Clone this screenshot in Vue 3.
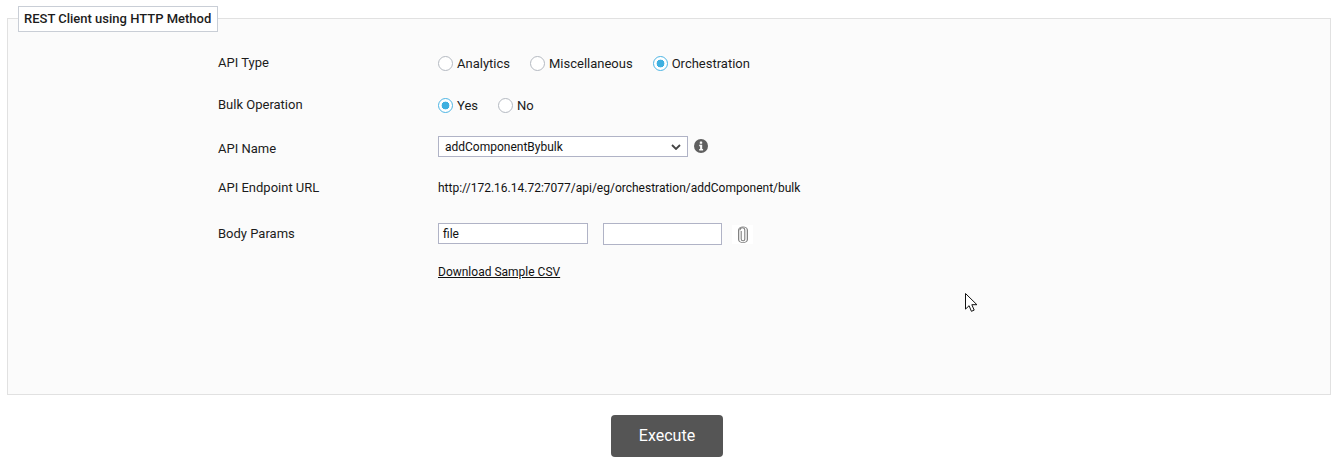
<script setup>
const apiTypes = [
  { label: 'Analytics', on: false },
  { label: 'Miscellaneous', on: false },
  { label: 'Orchestration', on: true }
]
const bulk = [
  { label: 'Yes', on: true },
  { label: 'No', on: false }
]
</script>

<template>
  <div class="page">
    <section class="panel">
      <h2 class="legend">REST Client using HTTP Method</h2>
      <div class="form">
        <div class="row row-type">
          <span class="label">API Type</span>
          <div class="radios">
            <span v-for="r in apiTypes" :key="r.label" class="radio">
              <i class="dot" :class="{ on: r.on }"></i>{{ r.label }}
            </span>
          </div>
        </div>
        <div class="row row-bulk">
          <span class="label">Bulk Operation</span>
          <div class="radios">
            <span v-for="r in bulk" :key="r.label" class="radio">
              <i class="dot" :class="{ on: r.on }"></i>{{ r.label }}
            </span>
          </div>
        </div>
        <div class="row row-name">
          <span class="label name-label">API Name</span>
          <div class="inline shift">
            <div class="select">
              <span>addComponentBybulk</span>
              <svg width="10" height="6" viewBox="0 0 10 6"><path d="M1 1l4 4 4-4" fill="none" stroke="#444" stroke-width="1.8"/></svg>
            </div>
            <svg class="info" width="14" height="14" viewBox="0 0 14 14">
              <circle cx="7" cy="7" r="7" fill="#5f5f5f"/>
              <rect x="5.8" y="2.4" width="2.4" height="2.3" rx=".5" fill="#fafafa"/>
              <path d="M5.2 5.8h3v4.2h.9v1.4H5.2V10h.9V7.2h-.9z" fill="#fafafa"/>
            </svg>
          </div>
        </div>
        <div class="row row-url">
          <span class="label">API Endpoint URL</span>
          <span class="url">http://172.16.14.72:7077/api/eg/orchestration/addComponent/bulk</span>
        </div>
        <div class="row row-body">
          <span class="label">Body Params</span>
          <div class="inline top">
            <div class="input first">file</div>
            <div class="input second"></div>
            <span class="clip">
              <svg width="12" height="18" viewBox="0 0 12 18">
                <path d="M4.2 5v8a1.8 1.8 0 0 0 3.6 0V4.2a2.4 2.4 0 0 0-4.8 0" fill="none" stroke="#808080" stroke-width="1.1"/>
                <path d="M3 4.2a3 3 0 0 1 6 0v9a3 3 0 0 1-6 0V4.2" transform="translate(6 8.5) scale(1.45 1.05) translate(-6 -8.5)" fill="none" stroke="#808080" stroke-width=".85"/>
              </svg>
            </span>
          </div>
        </div>
        <div class="row row-link">
          <span></span>
          <a class="link">Download Sample CSV</a>
        </div>
      </div>
      <svg class="cursor" width="13" height="20" viewBox="0 0 13 20">
        <path d="M.5.5v15.6l3.6-3.4 2.3 5.6 2.8-1.2-2.4-5.4h5.1z" fill="#fff" stroke="#111" stroke-width="1"/>
      </svg>
    </section>
    <div class="actions">
      <button class="exec">Execute</button>
    </div>
  </div>
</template>

<style scoped>
.page {
  width: 1340px;
  height: 466px;
  overflow: hidden;
  background: #fff;
  font-family: Roboto, "Liberation Sans", sans-serif;
  font-size: 13px;
  color: #1c1c1c;
  padding-top: 18px;
  box-sizing: border-box;
}
.panel {
  position: relative;
  box-sizing: border-box;
  width: 1324px;
  height: 377px;
  margin-left: 7px;
  background: #fbfbfb;
  border: 1px solid #e1e1e1;
}
.legend {
  box-sizing: border-box;
  width: 200px;
  height: 26px;
  margin: -13px 0 0 10px;
  padding: 0 5px;
  border: 1px solid #c9ced6;
  background: #fff;
  font-size: 13px;
  font-weight: 500;
  line-height: 24px;
  white-space: nowrap;
  color: #1c1c1c;
}
.form {
  padding-left: 210px;
  margin-top: 10px;
}
.row {
  display: grid;
  grid-template-columns: 220px 1fr;
  align-items: center;
}
.row-type { height: 42px; }
.row-bulk { height: 42px; }
.row-name { height: 42px; }
.row-url { height: 40px; }
.row-body { height: 52px; }
.row-link { height: 24px; }
.label { position: relative; top: -1px; }
.name-label { top: 1px; }
.radios { display: flex; gap: 20px; }
.radio { display: inline-flex; align-items: center; }
.dot {
  box-sizing: border-box;
  width: 15px;
  height: 15px;
  margin-right: 4px;
  border-radius: 50%;
  border: 1px solid #b4b9c1;
  background: #fff;
}
.dot.on {
  border-color: #4db5e4;
  background: radial-gradient(circle, #3fb0e0 0 3.6px, #fff 4.2px);
}
.inline { display: flex; align-items: center; }
.shift { margin-top: -1px; }
.top { align-items: flex-start; }
.select {
  box-sizing: border-box;
  width: 250px;
  height: 21px;
  display: flex;
  align-items: center;
  justify-content: space-between;
  padding: 0 6px 0 6px;
  border: 1px solid #b0b3c6;
  background: #fff;
  font-size: 12px;
  color: #111;
}
.info { margin: -1px 0 0 6px; }
.url { color: #111; font-size: 12px; }
.input {
  box-sizing: border-box;
  border: 1px solid #b0b3c6;
  background: #fff;
  padding-left: 4px;
  font-size: 12px;
  color: #111;
}
.first { width: 150px; height: 21px; line-height: 21px; }
.second { width: 119px; height: 22px; margin-left: 15px; }
.clip {
  display: flex;
  align-items: center;
  justify-content: center;
  width: 21px;
  height: 19px;
  margin: 2px 0 0 10px;
  background: #fff;
}
.link { font-size: 12px; text-decoration: underline; color: #111; }
.cursor { position: absolute; left: 957px; top: 274px; }
.actions { display: flex; justify-content: center; padding: 20px 7px 0 0; }
.exec {
  width: 112px;
  height: 42px;
  padding: 0 0 2px 1px;
  border: 0;
  border-radius: 4px;
  background: #555;
  color: #fff;
  font-family: inherit;
  font-size: 16px;
}
</style>
